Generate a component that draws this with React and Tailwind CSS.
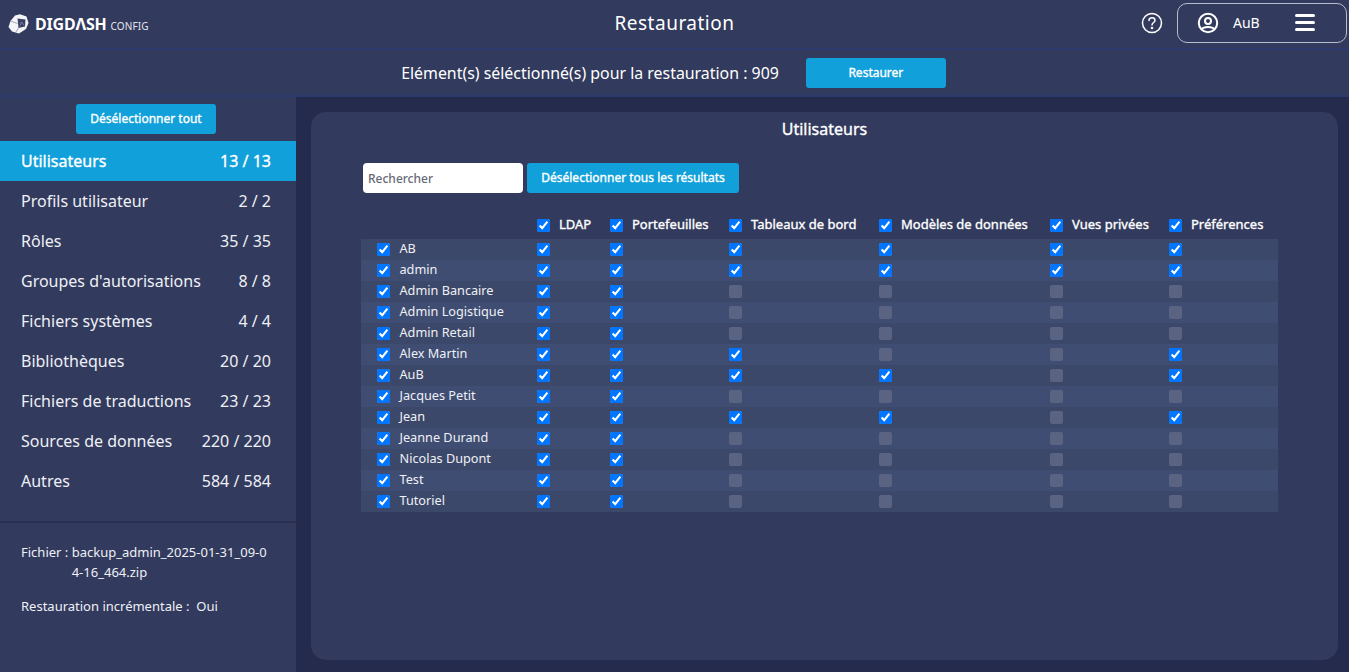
const rows = [
  ["AB", [1,1,1,1,1,1]],
  ["admin", [1,1,1,1,1,1]],
  ["Admin Bancaire", [1,1,0,0,0,0]],
  ["Admin Logistique", [1,1,0,0,0,0]],
  ["Admin Retail", [1,1,0,0,0,0]],
  ["Alex Martin", [1,1,1,0,0,1]],
  ["AuB", [1,1,1,1,0,1]],
  ["Jacques Petit", [1,1,0,0,0,0]],
  ["Jean", [1,1,1,1,0,1]],
  ["Jeanne Durand", [1,1,0,0,0,0]],
  ["Nicolas Dupont", [1,1,0,0,0,0]],
  ["Test", [1,1,0,0,0,0]],
  ["Tutoriel", [1,1,0,0,0,0]],
];
const cols = ["LDAP","Portefeuilles","Tableaux de bord","Modèles de données","Vues privées","Préférences"];
const side = [
  ["Utilisateurs","13 / 13"],["Profils utilisateur","2 / 2"],["Rôles","35 / 35"],["Groupes d'autorisations","8 / 8"],
  ["Fichiers systèmes","4 / 4"],["Bibliothèques","20 / 20"],["Fichiers de traductions","23 / 23"],["Sources de données","220 / 220"],["Autres","584 / 584"],
];
const grid = "grid grid-cols-[176px_73px_119px_150px_171px_119px_109px]";
const fakeBold = "[-webkit-text-stroke:0.35px_white]";

function Box({ on }) {
  return on
    ? <input type="checkbox" checked readOnly className="m-0 block w-[13px] h-[13px]" />
    : <input type="checkbox" disabled className="m-0 block w-[13px] h-[13px] appearance-none rounded-[2px] bg-[#5a6382]" />;
}

function Logo() {
  return (
    <div className="flex items-center text-white">
      <svg width="21" height="20" viewBox="0 0 21 20" className="mr-[6px]">
        <path d="M7 1.5 L12 0.3 L18.5 2.5 L20.5 9 L18 15 L11 19.5 L4 17.5 L0.5 13 L2.5 7 Z" fill="#f4f5f8" />
        <path d="M9.5 4.5 L17.5 5.5 L17 12.5 L10.5 14 Z" fill="#3a4268" />
        <path d="M2.5 7 L9.5 9.5 M10.5 14 L8 18 M12 11.5 L13.5 8 L16 11" fill="none" stroke="#8b90a8" strokeWidth="0.8" />
      </svg>
      <span className="font-bold text-[16px] leading-none -tracking-[0.2px]">DIGDΛSH</span>
      <span className="ml-[4px] mt-[3px] text-[10px] leading-none tracking-[0.1px] text-[#e4e6ee]">CONFIG</span>
    </div>
  );
}

function HelpIcon() {
  return (
    <svg width="22" height="22" viewBox="0 0 22 22" fill="none" stroke="white" strokeWidth="1.5" strokeLinecap="round">
      <circle cx="11" cy="11" r="9.5" />
      <path d="M8 8.6 C8 6.8 9.4 5.8 11 5.8 C12.7 5.8 14 6.9 14 8.4 C14 10.4 11 10.6 11 12.9" />
      <circle cx="11" cy="16" r="0.6" fill="white" />
    </svg>
  );
}

function UserIcon() {
  return (
    <svg width="22" height="22" viewBox="0 0 22 22" fill="none" stroke="white" strokeWidth="2">
      <circle cx="11" cy="11" r="9.2" />
      <circle cx="11" cy="9" r="3" />
      <path d="M4.8 17 C6.5 14.2 15.5 14.2 17.2 17" />
    </svg>
  );
}

export default function App() {
  return (
    <div className="w-[1349px] h-[672px] overflow-hidden flex flex-col bg-[#252b4d] text-white font-['Noto_Sans',sans-serif]">
      <header className="h-[50px] shrink-0 flex items-center justify-between bg-[#323a5d] border-b-2 border-[#2c3a6e] pl-[8px] pr-[2px] relative">
        <Logo />
        <h1 className="absolute left-0 right-0 text-center text-[19px] leading-none font-normal tracking-[0.5px] pointer-events-none -mt-[2px]">Restauration</h1>
        <div className="flex items-center -mt-[3px]">
          <HelpIcon />
          <div className="ml-[14px] w-[170px] h-[40px] rounded-[10px] border border-[#b9bcc9] flex items-center pl-[19px]">
            <UserIcon />
            <span className="ml-[14px] text-[14px]">AuB</span>
            <div className="ml-[35px] flex flex-col gap-[4px]">
              <span className="block w-[20px] h-[3px] rounded-sm bg-white"></span>
              <span className="block w-[20px] h-[3px] rounded-sm bg-white"></span>
              <span className="block w-[20px] h-[3px] rounded-sm bg-white"></span>
            </div>
          </div>
        </div>
      </header>

      <div className="h-[47px] shrink-0 flex items-center justify-center bg-[#323a5d] border-b-2 border-[#2c3a6e] pr-[2px]">
        <span className="text-[15.9px] mt-[2px]">Elément(s) séléctionné(s) pour la restauration : 909</span>
        <button className={"ml-[27px] w-[140px] h-[30px] rounded-[3px] bg-[#11a0da] text-[12px] " + fakeBold}>Restaurer</button>
      </div>

      <div className="flex-1 flex min-h-0">
        <aside className="w-[296px] shrink-0 bg-[#323a5d] flex flex-col">
          <div className="h-[44px] shrink-0 flex items-center justify-center pr-[4px]">
            <button className={"w-[140px] h-[30px] rounded-[3px] bg-[#11a0da] text-[12px] " + fakeBold}>Désélectionner tout</button>
          </div>
          <nav className="flex flex-col">
            {side.map(([n, c], i) => (
              <div key={n} className={"h-[40px] flex items-center justify-between pl-[21px] pr-[25px] text-[16px] " + (i === 0 ? "bg-[#11a0da] " + fakeBold : "text-[#eef0f6]")}>
                <span>{n}</span><span>{c}</span>
              </div>
            ))}
          </nav>
          <div className="mt-[20px] border-t-2 border-[#2a3052] pl-[21px] pr-[25px] pt-[19px] text-[13px] leading-[20px] text-[#eef0f6]">
            <div className="flex">
              <span className="whitespace-pre">Fichier : </span>
              <span className="break-all">backup_admin_2025-01-31_09-04-16_464.zip</span>
            </div>
            <div className="mt-[14px] whitespace-pre">Restauration incrémentale :  Oui</div>
          </div>
        </aside>

        <main className="flex-1 min-w-0 pl-[15px] pr-[11px] pt-[15px] pb-[12px]">
          <section className="h-full rounded-[15px] bg-[#323a5d] pt-[7px] pl-[50px]">
            <h2 className={"text-center text-[16px] leading-[20px] pr-[50px] " + fakeBold}>Utilisateurs</h2>
            <div className="mt-[24px] flex items-center pl-[2px]">
              <div className="w-[160px] h-[30px] rounded-[4px] bg-white pl-[5px] pt-[2px] flex items-center text-[12px] text-[#666a76] font-medium">Rechercher</div>
              <button className={"ml-[4px] w-[212px] h-[30px] rounded-[3px] bg-[#11a0da] text-[12px] " + fakeBold}>Désélectionner tous les résultats</button>
            </div>
            <div className="mt-[19px] w-[917px]">
              <div className={grid + " h-[27px]"}>
                <div></div>
                {cols.map((c) => (
                  <div key={c} className={"flex items-center gap-[9px] text-[13px] whitespace-nowrap " + fakeBold}>
                    <Box on={1} /><span className="-mt-[2px]">{c}</span>
                  </div>
                ))}
              </div>
              {rows.map(([n, v], i) => (
                <div key={n} className={grid + " h-[21px] " + (i % 2 === 0 ? "bg-[#3c4869]" : "bg-[#3f4d72]")}>
                  <div className="flex items-center pl-[16px] text-[12.7px] text-[#eef0f6] whitespace-nowrap">
                    <Box on={1} /><span className="ml-[9.5px] -mt-[1px]">{n}</span>
                  </div>
                  {v.map((x, j) => (
                    <div key={j} className="flex items-center"><Box on={x} /></div>
                  ))}
                </div>
              ))}
            </div>
          </section>
        </main>
      </div>
    </div>
  );
}
